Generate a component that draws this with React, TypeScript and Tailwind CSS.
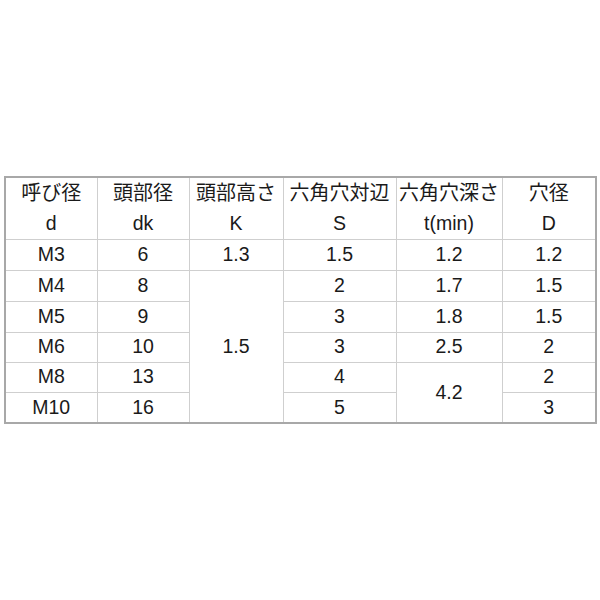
import React from 'react';

const cell = 'border border-[#cfcfcf] text-center align-middle p-0 leading-none';
const head = 'leading-[30px] text-[20px]';

export default function App() {
  return (
    <div className="w-[600px] h-[600px] bg-white pt-[176px] pl-[4px]">
      <table
        className="table-fixed border-collapse border-2 border-[#a8a8a8] text-[19.5px] text-[#1a1a1a] w-[591px]"
        style={{ fontFamily: '"Liberation Sans", "Noto Sans CJK JP", sans-serif' }}
      >
        <colgroup>
          <col className="w-[92px]" />
          <col className="w-[92px]" />
          <col className="w-[94px]" />
          <col className="w-[113px]" />
          <col className="w-[106px]" />
          <col className="w-[94px]" />
        </colgroup>
        <thead>
          <tr className="h-[62px]">
            <th className={`${cell} font-normal`}>
              <div className={head}>呼び径</div>
              <div className="leading-[30px]">d</div>
            </th>
            <th className={`${cell} font-normal`}>
              <div className={head}>頭部径</div>
              <div className="leading-[30px]">dk</div>
            </th>
            <th className={`${cell} font-normal`}>
              <div className={head}>頭部高さ</div>
              <div className="leading-[30px]">K</div>
            </th>
            <th className={`${cell} font-normal`}>
              <div className={head}>六角穴対辺</div>
              <div className="leading-[30px]">S</div>
            </th>
            <th className={`${cell} font-normal`}>
              <div className={head}>六角穴深さ</div>
              <div className="leading-[30px]">t(min)</div>
            </th>
            <th className={`${cell} font-normal`}>
              <div className={head}>穴径</div>
              <div className="leading-[30px]">D</div>
            </th>
          </tr>
        </thead>
        <tbody>
          <tr className="h-[31px]">
            <td className={cell}>M3</td>
            <td className={cell}>6</td>
            <td className={cell}>1.3</td>
            <td className={cell}>1.5</td>
            <td className={cell}>1.2</td>
            <td className={cell}>1.2</td>
          </tr>
          <tr className="h-[31px]">
            <td className={cell}>M4</td>
            <td className={cell}>8</td>
            <td className={cell} rowSpan={5}>1.5</td>
            <td className={cell}>2</td>
            <td className={cell}>1.7</td>
            <td className={cell}>1.5</td>
          </tr>
          <tr className="h-[31px]">
            <td className={cell}>M5</td>
            <td className={cell}>9</td>
            <td className={cell}>3</td>
            <td className={cell}>1.8</td>
            <td className={cell}>1.5</td>
          </tr>
          <tr className="h-[30px]">
            <td className={cell}>M6</td>
            <td className={cell}>10</td>
            <td className={cell}>3</td>
            <td className={cell}>2.5</td>
            <td className={cell}>2</td>
          </tr>
          <tr className="h-[30px]">
            <td className={cell}>M8</td>
            <td className={cell}>13</td>
            <td className={cell}>4</td>
            <td className={cell} rowSpan={2}>4.2</td>
            <td className={cell}>2</td>
          </tr>
          <tr className="h-[31px]">
            <td className={cell}>M10</td>
            <td className={cell}>16</td>
            <td className={cell}>5</td>
            <td className={cell}>3</td>
          </tr>
        </tbody>
      </table>
    </div>
  );
}
